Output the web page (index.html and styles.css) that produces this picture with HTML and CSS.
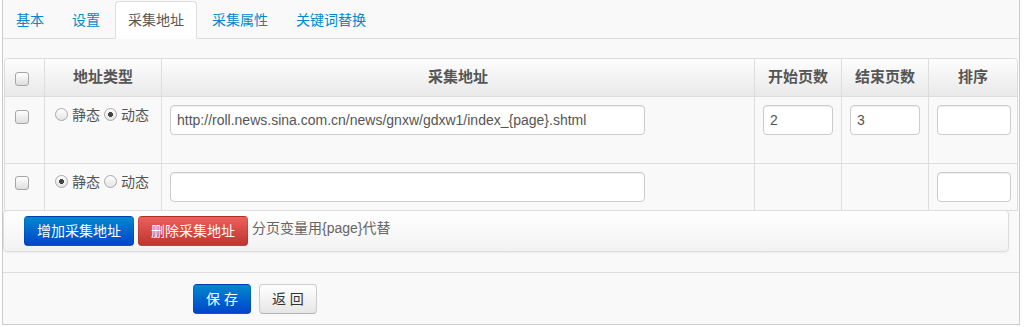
FILE: index.html
```html
<!DOCTYPE html>
<html lang="zh-CN">
<head>
    <meta charset="UTF-8">
    <title>采集地址</title>
    <link rel="stylesheet" href="styles.css">
</head>
<body>
    <div class="panel">
        <ul class="tabs">
            <li><a href="#">基本</a></li>
            <li><a href="#">设置</a></li>
            <li class="active"><a href="#">采集地址</a></li>
            <li><a href="#">采集属性</a></li>
            <li><a href="#">关键词替换</a></li>
        </ul>
        <div class="tab-body">
            <table class="grid">
                <thead>
                    <tr>
                        <th class="c-check"><input type="checkbox" class="check"></th>
                        <th class="c-type">地址类型</th>
                        <th class="c-url">采集地址</th>
                        <th class="c-num">开始页数</th>
                        <th class="c-num">结束页数</th>
                        <th class="c-sort">排序</th>
                    </tr>
                </thead>
                <tbody>
                    <tr class="tall">
                        <td><input type="checkbox" class="check"></td>
                        <td><label class="opt first"><input type="radio" name="t1" class="radio">静态</label><label class="opt"><input type="radio" name="t1" class="radio" checked>动态</label></td>
                        <td><input type="text" class="field url" value="http://roll.news.sina.com.cn/news/gnxw/gdxw1/index_{page}.shtml"></td>
                        <td><input type="text" class="field num" value="2"></td>
                        <td><input type="text" class="field num" value="3"></td>
                        <td><input type="text" class="field sort"></td>
                    </tr>
                    <tr>
                        <td><input type="checkbox" class="check"></td>
                        <td><label class="opt first"><input type="radio" name="t2" class="radio" checked>静态</label><label class="opt"><input type="radio" name="t2" class="radio">动态</label></td>
                        <td><input type="text" class="field url"></td>
                        <td></td>
                        <td></td>
                        <td><input type="text" class="field sort"></td>
                    </tr>
                </tbody>
            </table>
            <div class="toolbar">
                <button class="btn btn-primary">增加采集地址</button>
                <button class="btn btn-danger">删除采集地址</button>
                <span class="hint">分页变量用{page}代替</span>
            </div>
        </div>
        <div class="actions">
            <button class="btn btn-primary">保 存</button>
            <button class="btn btn-default">返 回</button>
        </div>
    </div>
</body>
</html>
```

FILE: styles.css
```css
body { margin: 0; background: #fff; font-family: "Liberation Sans", "Noto Sans CJK SC", sans-serif; font-size: 14px; line-height: 20px; color: #555; }
.panel { margin-left: 2px; width: 1018px; box-sizing: border-box; border: 1px solid #ccc; border-top: none; background: #f9f9f9; padding-top: 1px; }

.tabs { list-style: none; margin: 0; padding: 0; display: flex; border-bottom: 1px solid #ddd; }
.tabs li { margin-bottom: -1px; margin-right: 2px; }
.tabs a { display: block; padding: 8px 12px; line-height: 20px; border: 1px solid transparent; border-radius: 4px 4px 0 0; color: #0088cc; text-decoration: none; }
.tabs .active a { background: #fff; border-color: #ddd #ddd transparent; color: #555; }

.tab-body { padding: 19px 0 20px 0; }

.grid { margin-left: 1px; width: 1014px; table-layout: fixed; border-collapse: separate; border-spacing: 0; border: 1px solid #ddd; border-radius: 4px 4px 0 0; }
.grid th, .grid td { padding: 8px; vertical-align: top; border-left: 1px solid #ddd; border-top: 1px solid #ddd; text-align: left; }
.grid th:first-child, .grid td:first-child { border-left: none; }
.grid thead th { border-top: none; padding-bottom: 9px; font-size: 15px; line-height: 20px; font-weight: bold; text-align: center; color: #555; background: linear-gradient(to bottom, #fdfdfd, #e9e9e9); }
.grid thead th:first-child { border-top-left-radius: 4px; text-align: left; }
.grid thead th:last-child { border-top-right-radius: 4px; }
.grid .tall td { padding-bottom: 28px; }
.c-check { width: 23px; }
.c-type { width: 100px; }
.c-url { width: 576px; }
.c-num { width: 70px; }
.c-sort { width: 72px; }

.check { -webkit-appearance: none; appearance: none; display: block; width: 14px; height: 14px; margin: 5px 0 0 2px; box-sizing: border-box; border: 1px solid #a6a6a6; border-radius: 3px; background: linear-gradient(to bottom, #fff, #dedede); }
.grid tbody tr:last-child .check { margin-top: 4px; }

.opt { white-space: nowrap; color: #555; }
.radio { -webkit-appearance: none; appearance: none; display: inline-block; vertical-align: top; width: 13px; height: 13px; margin: 3px 4px 0 4px; box-sizing: border-box; border: 1px solid #aaa; border-radius: 50%; background: linear-gradient(to bottom, #fff, #e4e4e4); }
.opt.first .radio { margin-left: 2px; }
.radio:checked { background: radial-gradient(circle, #444 0, #444 2.2px, transparent 2.8px), linear-gradient(to bottom, #fff, #e4e4e4); }

.field { display: block; height: 30px; box-sizing: border-box; padding: 4px 6px; margin: 0; border: 1px solid #ccc; border-radius: 4px; background: #fff; box-shadow: inset 0 1px 1px rgba(0, 0, 0, 0.075); font-family: "Liberation Sans", "Noto Sans CJK SC", sans-serif; font-size: 14px; line-height: 20px; color: #555; }
.field.url { width: 475px; }
.field.num { width: 70px; }
.field.sort { width: 74px; }

.toolbar { position: relative; margin: -1px 10px 0 0; display: flex; align-items: flex-start; gap: 4px; padding: 5px 20px; border: 1px solid #ddd; border-radius: 4px; background: linear-gradient(to bottom, #fff, #f2f2f2); box-shadow: 0 1px 2px rgba(0, 0, 0, 0.05); }
.hint { margin-top: 2px; color: #666; }

.btn { display: inline-block; padding: 4px 12px; font-family: "Liberation Sans", "Noto Sans CJK SC", sans-serif; font-size: 14px; line-height: 20px; border: 1px solid; border-radius: 4px; cursor: pointer; }
.btn-primary { color: #fff; background: linear-gradient(to bottom, #0088cc, #0044cc); border-color: rgba(0, 0, 0, 0.1) rgba(0, 0, 0, 0.1) rgba(0, 0, 0, 0.25); }
.btn-danger { color: #fff; background: linear-gradient(to bottom, #ee5f5b, #bd362f); border-color: rgba(0, 0, 0, 0.1) rgba(0, 0, 0, 0.1) rgba(0, 0, 0, 0.25); }
.btn-default { color: #333; background: linear-gradient(to bottom, #fff, #e6e6e6); border-color: #ccc #ccc #b3b3b3; }

.actions { display: flex; gap: 8px; padding: 11px 0 10px 190px; border-top: 1px solid #ddd; }
```
